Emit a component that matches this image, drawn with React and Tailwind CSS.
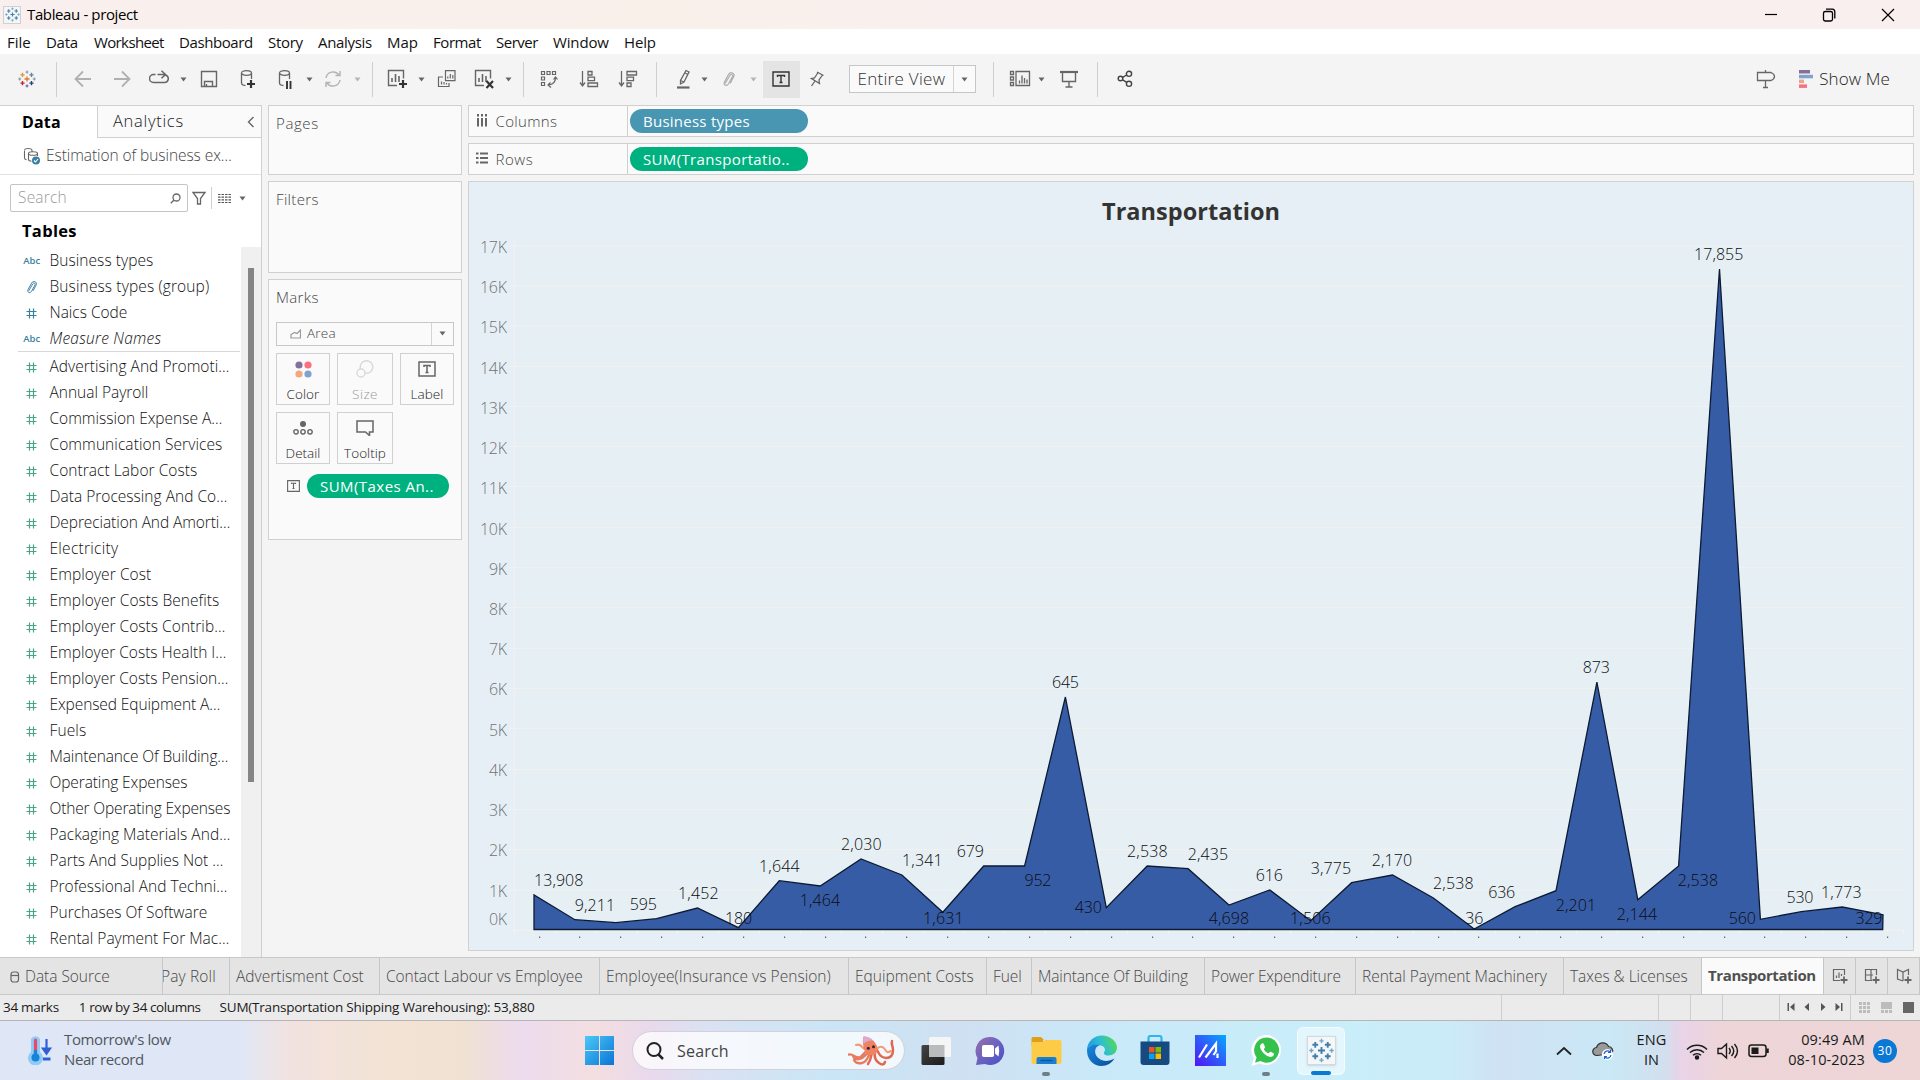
import React, { useLayoutEffect, useRef, useState } from "react";

/* Text that spreads its letters to fill a given width. */
function T({ w, className = "", children }) {
  const ref = useRef(null);
  const [ls, setLs] = useState(0);
  useLayoutEffect(() => {
    const natural = ref.current.getBoundingClientRect().width;
    setLs((w + 0.8 - natural) / String(children).length);
  }, []);
  return (
    <span ref={ref} style={{ letterSpacing: ls }} className={"inline-block shrink-0 whitespace-pre " + className}>
      {children}
    </span>
  );
}

const S = ({ w, h = w, className = "", children, stroke = "#666", sw = 1.3 }) => (
  <svg width={w} height={h} viewBox={`0 0 ${w} ${h}`} fill="none" stroke={stroke} strokeWidth={sw} className={"block shrink-0 " + className}>
    {children}
  </svg>
);

const Caret = ({ className = "", color = "#666" }) => (
  <S w={7} h={5} stroke="none" className={className}>
    <path d="M0.5 0.5h6L3.5 4.5z" fill={color} />
  </S>
);
const Sep = ({ className = "" }) => <div className={"h-[35px] w-px shrink-0 bg-[#cfcfcf] " + className} />;

const plus = (x, y, r) => `M${x - r} ${y}h${2 * r}M${x} ${y - r}v${2 * r}`;

function TableauMark({ size = 18, mono = false, className = "" }) {
  const c = mono
    ? ["#3f7fae", "#3f7fae", "#3f7fae", "#3f7fae", "#3f7fae", "#6fa5c9", "#6fa5c9", "#6fa5c9", "#6fa5c9"]
    : ["#e8762d", "#eb912c", "#5b879b", "#c72035", "#1f447e", "#7199a6", "#7199a6", "#7f93a6", "#59579b"];
  return (
    <svg width={size} height={size} viewBox="0 0 20 20" fill="none" className={"block shrink-0 " + className} strokeWidth="1.5">
      <path d={plus(10, 10, 2.8)} stroke={c[0]} />
      <path d={plus(5, 5.4, 2.3)} stroke={c[1]} />
      <path d={plus(15, 5.4, 2.3)} stroke={c[2]} />
      <path d={plus(5, 14.6, 2.3)} stroke={c[3]} />
      <path d={plus(15, 14.6, 2.3)} stroke={c[4]} />
      <path d={plus(10, 2.3, 1.7)} stroke={c[5]} strokeWidth="1.1" />
      <path d={plus(10, 17.7, 1.7)} stroke={c[8]} strokeWidth="1.1" />
      <path d={plus(1.9, 10, 1.7)} stroke={c[6]} strokeWidth="1.1" />
      <path d={plus(18.1, 10, 1.7)} stroke={c[7]} strokeWidth="1.1" />
    </svg>
  );
}

const clipPath = "M4.2 12.5L9 4.2c1-1.7 3.4-.5 2.5 1.3L7.4 13c-1.6 2.8-5.4 1-4-1.9L7.6 3.4C9.500 .2 14.200 2 12.800 5.600L9.200 12.400";

function TitleBar() {
  return (
    <div className="flex h-[29px] shrink-0 items-center bg-linear-to-r from-[#f9efee] via-[#faf0ea] via-35% to-[#f9efee] to-50%">
      <div className="ml-[3px] flex h-[18px] w-[18px] items-center justify-center border border-[#d0d0d0] bg-[#f3f5f6]">
        <TableauMark size={15} mono />
      </div>
      <T w={110} className="ml-[6px] text-[15px] text-black">Tableau - project</T>
      <S w={14} className="ml-auto" stroke="#000" sw={1.2}><path d="M1 6.500h12" /></S>
      <S w={14} className="ml-[44px]" stroke="#000" sw={1.3}>
        <rect x="1.500" y="3.500" width="9" height="9.500" rx="1.800" />
        <path d="M4 1.200h6.300a2.700 2.700 0 0 1 2.500 2.700v6.500" />
      </S>
      <S w={14} className="mr-[25px] ml-[45px]" stroke="#000" sw={1.2}><path d="M1 1l12 12M13 1L1 13" /></S>
    </div>
  );
}

const MENU = [
  ["File", 23, "w-[39px]"], ["Data", 31, "w-[48px]"], ["Worksheet", 69, "w-[85px]"], ["Dashboard", 73, "w-[89px]"],
  ["Story", 34, "w-[50px]"], ["Analysis", 53, "w-[69px]"], ["Map", 30, "w-[46px]"], ["Format", 47, "w-[63px]"],
  ["Server", 41, "w-[57px]"], ["Window", 55, "w-[71px]"], ["Help", 31, "w-[50px]"],
];

function SheetBars({ x = 0 }) {
  return <path d={`M${x + 4} 13v-4M${x + 7.500} 13V5M${x + 11} 13V7`} strokeWidth="1.600" />;
}

function Toolbar() {
  return (
    <div className="flex h-[51px] shrink-0 items-center bg-[#f4f4f4] pb-px">
      <TableauMark className="ml-[18px]" />
      <Sep className="ml-5" />
      <S w={18} className="ml-[17px]" stroke="#b0b0b0" sw={1.8}><path d="M17 9H2M9 1.500L1.500 9L9 16.500" /></S>
      <S w={18} className="ml-[21px]" stroke="#b0b0b0" sw={1.8}><path d="M1 9h15M9 1.500L16.500 9L9 16.500" /></S>
      <S w={20} h={18} className="ml-[18px]" sw={1.5}><path d="M6.500 4.500H4.500a3.800 3.800 0 0 0 0 8h11a3.800 3.800 0 0 0 2-7L16.500 4.500H8.500M12.500 .800l4 3.700l-4 3.700" /></S>
      <Caret className="ml-[11px]" />
      <S w={18} className="ml-[13px]" sw={1.4}><path d="M1.500 1.500h15v15h-15zM4.500 16.500v-5h8v5M6.500 14v2.500" /></S>
      <S w={16} h={20} className="ml-[22px]" sw={1.3}>
        <ellipse cx="6.500" cy="4" rx="5" ry="2.300" /><path d="M1.500 4v10c0 1.500 1.500 2.300 4 2.500M11.500 4v6" />
        <path d="M11 11v8M7 15h8" stroke="#333" strokeWidth="2.200" />
      </S>
      <S w={16} h={20} className="ml-[22px]" sw={1.3}>
        <ellipse cx="6.500" cy="4" rx="5" ry="2.300" /><path d="M1.500 4v10c0 1.500 1.500 2.300 4 2.500M11.500 4v6" />
        <path d="M9 12v8M12.500 12v8" stroke="#333" strokeWidth="1.900" />
      </S>
      <Caret className="ml-3" />
      <S w={20} h={18} className="ml-2.5" stroke="#b5b5b5" sw={1.5}>
        <path d="M3 8a7.200 7.200 0 0 1 13-3M17 10a7.200 7.200 0 0 1-13 3M17 1v4.500h-4.500M3 17v-4.500h4.500" />
      </S>
      <Caret className="ml-[11px]" color="#b5b5b5" />
      <Sep className="ml-[11px]" />
      <S w={21} h={20} className="ml-3.5" sw={1.4}>
        <path d="M10 16.500H1.500v-15h15v8" /><SheetBars x={1} />
        <path d="M16 11v8M12 15h8" stroke="#333" strokeWidth="2.200" />
      </S>
      <Caret className="ml-2.5" />
      <S w={20} h={18} className="ml-3" sw={1.2}>
        <path d="M8.500 .600h9.500v10h-9.500zM6 7H1.500v9.500H12V13M10.800 8.500v-2M13.300 8.500v-4.500M15.800 8.500v-3.500M4.500 14.500v-3M7 14.500v-2.500M9.500 14.500v-1.500" />
      </S>
      <S w={21} h={20} className="ml-[17px]" sw={1.4}>
        <path d="M10 16.500H1.500v-15h15v8" /><SheetBars x={1} />
        <path d="M12.500 12l6.500 7M19 12l-6.500 7" stroke="#333" strokeWidth="2.200" />
      </S>
      <Caret className="ml-2.5" />
      <Sep className="ml-[11px]" />
      <S w={18} className="ml-4" sw={1.2}>
        <path d="M1.500 1.500h3v3h-3zM7 1.500h3v3H7zM12.500 1.500h3v3h-3zM1.500 7h3v3h-3zM1.500 12.500h3v3h-3zM15.500 7.500c0 4-2 7-7 7.500M13.500 9.500l2-2.500l2 2.500M10.500 12.500L8 15l3 2.500" />
      </S>
      <S w={20} h={18} className="ml-[21px]" sw={1.3}><path d="M3.500 1v14M1 12.500L3.500 16L6 12.500M9 1.500h4v3.500H9zM9 7.200h6.500v3.500H9zM9 13h9.500v3.500H9z" /></S>
      <S w={20} h={18} className="ml-[19px]" sw={1.3}><path d="M3.500 1v14M1 12.500L3.500 16L6 12.500M9 1.500h9.500v3.500H9zM9 7.200h6.500v3.500H9zM9 13h4v3.500H9z" /></S>
      <Sep className="ml-[18px]" />
      <S w={16} h={20} className="ml-[19px]" sw={1.3}>
        <path d="M10 1.500l3 1.500L8 13l-3.500 2V11.500zM9 4l3 1.500M4.500 11.500L8 13" /><path d="M1 18.500h12.500" strokeWidth="2.200" />
      </S>
      <Caret className="ml-[9px]" />
      <S w={16} className="ml-[13px]" stroke="#b0b0b0" sw={1.2}><path d={clipPath} /></S>
      <Caret className="ml-[13px]" color="#b5b5b5" />
      <div className="ml-1.5 flex h-[37px] w-[37px] shrink-0 items-center justify-center bg-[#e4e4e4] pr-[2px]">
        <S w={18} h={16} stroke="#333" sw={1.4}><path d="M1 1h16v14H1zM5.500 6V4.500h7V6M9 4.500v7M7.500 11.500h3" /></S>
      </div>
      <S w={16} h={18} className="ml-[9px]" sw={1.3}><path d="M8 2l6.500 3.500M9 2.500L5.500 8l-3 .500l8 5l-.5-3.500l3.500-5M6 11l-3.500 5" /></S>
      <div className="ml-6 flex h-7 w-[127px] shrink-0 items-center border border-[#c6c6c6] bg-[#fafafa] pl-[7.500px]">
        <T w={87} className="text-[17px] font-[350] text-[#333]">Entire View</T>
        <div className="ml-auto flex h-full w-[22px] items-center justify-center border-l border-[#d4d4d4]"><Caret /></div>
      </div>
      <Sep className="ml-[17px]" />
      <S w={22} h={18} className="ml-[15px]" sw={1.3}><path d="M7 1.500h13.500v14H7zM1.500 1.500h3v3h-3zM1.500 7h3v3h-3zM1.500 12.500h3v3h-3zM10.500 13.500v-3M13 13.500v-8M15.500 13.500V8M18 13.500v-4" /></S>
      <Caret className="ml-[7px]" />
      <S w={18} className="ml-[15px]" sw={1.4}><path d="M2.500 3v8.500h13V3M9 11.500V17M5.500 17h7" /><path d="M0 2h18" strokeWidth="2.200" /></S>
      <Sep className="ml-[19px]" />
      <S w={16} h={18} className="ml-[19px]" stroke="#444" sw={1.4}><circle cx="3.500" cy="8.500" r="2.300" /><circle cx="12" cy="3.800" r="2.600" /><circle cx="12" cy="13.800" r="2.600" /><path d="M5.600 7.400L9.700 5M5.600 9.800l4.200 2.600" /></S>
      <S w={20} h={20} className="ml-auto" sw={1.3}><path d="M1.500 3.500h13.500q3.500 1.500 3.500 4t-3.500 4H1.500zM9.500 1v2.500M9.500 11.500v7M7 18.500h5" /></S>
      <S w={14} h={18} stroke="none" className="ml-[23px]">
        <path d="M0 0h11v3.500H0z" fill="#86709a" /><path d="M0 4.800h14v3.500H0z" fill="#7fa3cf" /><path d="M0 9.600h5v3.500H0z" fill="#f0a58a" /><path d="M0 14.400h8v3.500H0z" fill="#f9707f" />
      </S>
      <T w={70} className="mr-[30px] ml-[6px] text-[17px] font-[350] text-[#222]">Show Me</T>
    </div>
  );
}

const DIMS = [["abc", "Business types", 103], ["clip", "Business types (group)", 159], ["num", "Naics Code", 77], ["abc", "Measure Names", 111]];
const MEASURES = [
  ["Advertising And Promoti…", 179], ["Annual Payroll", 98], ["Commission Expense A…", 172], ["Communication Services", 172],
  ["Contract Labor Costs", 147], ["Data Processing And Co…", 177], ["Depreciation And Amorti…", 180], ["Electricity", 68],
  ["Employer Cost", 101], ["Employer Costs Benefits", 169], ["Employer Costs Contrib…", 175], ["Employer Costs Health I…", 176],
  ["Employer Costs Pension…", 178], ["Expensed Equipment A…", 170], ["Fuels", 36], ["Maintenance Of Building…", 178],
  ["Operating Expenses", 137], ["Other Operating Expenses", 180], ["Packaging Materials And…", 180], ["Parts And Supplies Not …", 173],
  ["Professional And Techni…", 177], ["Purchases Of Software", 157], ["Rental Payment For Mac…", 179],
];

function Field({ icon, text, w, italic, color = "#4aa583" }) {
  return (
    <div className="flex h-[26px] items-center">
      <div className="flex w-[49.500px] justify-center pl-[14px]">
        {icon === "abc" && <T w={16} className="text-[9.500px] font-semibold text-[#3b7f9f]">Abc</T>}
        {icon === "clip" && <S w={16} stroke="#3b7f9f" sw={1.1} className="h-3.5 w-3.5"><path d={clipPath} /></S>}
        {icon === "num" && <S w={11} stroke={color} sw={1.2}><path d="M3.500 .500v10M7.500 .500v10M.500 3.500h10M.500 7.500h10" /></S>}
      </div>
      <T w={w} className={"text-[15.500px] font-[350] text-[#111] " + (italic ? "italic" : "")}>{text}</T>
    </div>
  );
}

function DataPanel() {
  return (
    <div className="flex w-[262px] shrink-0 flex-col border-t border-r border-[#d0d0d0] bg-white">
      <div className="flex h-8 shrink-0">
        <div className="flex w-[97px] items-center pb-px pl-[22px]"><T w={38} className="text-[16px] font-bold text-black">Data</T></div>
        <div className="flex flex-1 items-center border-b border-l border-[#d0d0d0] bg-[#fafafa] pl-[15px]">
          <T w={70} className="text-[16.500px] font-[350] text-[#222]">Analytics</T>
          <S w={8} h={12} className="mr-[6px] ml-auto" sw={1.4}><path d="M6.500 1L1.500 6l5 5" /></S>
        </div>
      </div>
      <div className="flex h-[37px] shrink-0 items-center border-b border-[#e2e2e2]">
        <S w={18} h={18} className="ml-[23px]" sw={1.1}>
          <path d="M1.500 4v7c0 1 1 1.500 2 1.600M9 5V3M1.500 3.500C1.500 .800 9 .800 9 3.500" /><ellipse cx="10" cy="6.500" rx="4.500" ry="1.800" /><path d="M5.500 6.500v6c0 1 1 1.600 3 1.800M14.500 6.500V9" />
          <circle cx="13" cy="13.500" r="4" fill="#3b7fa5" stroke="none" /><path d="M11 13.500l1.500 1.500l2.500-3" stroke="#fff" />
        </S>
        <T w={185} className="ml-[5px] text-[15.500px] font-[350] text-[#444]">Estimation of business ex…</T>
      </div>
      <div className="mt-[9px] ml-[10px] flex h-7 shrink-0 items-center">
        <div className="flex h-7 w-[178px] items-center rounded-xs border border-[#c4c4c4] pr-1.5 pl-[7px]">
          <T w={48} className="text-[15.500px] font-[350] text-[#9a9a9a]">Search</T>
          <S w={11} className="ml-auto" sw={1.3}><circle cx="6.500" cy="4.500" r="3.500" /><path d="M4 7L.800 10.200" /></S>
        </div>
        <S w={14} className="ml-[3.500px]" sw={1.3}><path d="M1 1.500h12L8.500 7.500v5.500h-3V7.500z" /></S>
        <div className="ml-[5px] h-[22px] w-px bg-[#d0d0d0]" />
        <S w={13} h={11} className="ml-[6px]" sw={1.2} stroke="#555"><path d="M0 1.500h13M0 4.100h13M0 6.800h13M0 9.500h13" strokeDasharray="2.500 1" /></S>
        <Caret className="ml-[8px]" />
      </div>
      <div className="flex h-[35px] shrink-0 items-center pt-[3px] pl-[22px]"><T w={54} className="text-[16.500px] font-bold text-black">Tables</T></div>
      <div className="flex min-h-0 flex-1">
        <div className="w-[241px] pt-px">
          {DIMS.map(([i, t, w], k) => <Field key={t} icon={i} text={t} w={w} italic={k === 3} color="#3b7f9f" />)}
          <div className="mt-[-1px] mb-[2px] ml-[18px] h-px w-[222px] bg-[#d8d8d8]" />
          {MEASURES.map(([t, w]) => <Field key={t} icon="num" text={t} w={w} />)}
        </div>
        <div className="flex w-5 justify-center bg-[#f0f0f0] pt-[21px]"><div className="ml-[-1px] h-[514px] w-1.5 bg-[#858585]" /></div>
      </div>
    </div>
  );
}

const card = "border border-[#d0d0d0] bg-[#fafafa]";

function MarkButton({ label, w, dim, className, children }) {
  return (
    <div className={"flex h-[52px] flex-col items-center border border-[#d0d0d0] " + className}>
      <div className="flex h-[31px] items-center">{children}</div>
      <T w={w} className={"text-[13.500px] leading-[19px] font-[350] " + (dim ? "text-[#9a9a9a]" : "text-[#222]")}>{label}</T>
    </div>
  );
}

function Cards() {
  return (
    <div className="ml-1.5 flex w-[194px] shrink-0 flex-col">
      <div className={card + " h-[70px] pt-[5px] pl-[7px]"}><T w={42} className="text-[15px] font-[350] text-[#444]">Pages</T></div>
      <div className={card + " mt-1.5 h-[92px] pt-[5px] pl-[7px]"}><T w={42} className="text-[15px] font-[350] text-[#444]">Filters</T></div>
      <div className={card + " mt-1.5 flex h-[261px] flex-col pt-[6px] pl-[7px]"}>
        <T w={42} className="self-start text-[15px] font-[350] text-[#444]">Marks</T>
        <div className="mt-[13px] flex h-6 w-[178px] shrink-0 items-center border border-[#c8c8c8] pl-[13px]">
          <S w={11} h={10} stroke="#999" sw={1.2}><path d="M1 9h9.500V1L7 4.500L4.500 3.500L1 5.500z" /></S>
          <T w={28} className="ml-1.5 text-[13.500px] font-[350] text-[#444]">Area</T>
          <div className="ml-auto flex h-full w-[22px] items-center justify-center border-l border-[#d4d4d4]"><Caret /></div>
        </div>
        <div className="mt-[7px] flex shrink-0 gap-[7px]">
          <MarkButton label="Color" w={32} className="w-[54px]">
            <S w={17} stroke="none"><circle cx="4" cy="4" r="3.600" fill="#86709a" /><circle cx="13" cy="4" r="3.600" fill="#f9707f" /><circle cx="4" cy="13" r="3.600" fill="#f2a77c" /><circle cx="13" cy="13" r="3.600" fill="#7fa3cf" /></S>
          </MarkButton>
          <MarkButton label="Size" w={25} dim className="w-[56px]">
            <S w={18} stroke="#dadada" sw={1.5}><circle cx="10.500" cy="7" r="6.300" /><circle cx="5" cy="13" r="4" fill="#fafafa" /></S>
          </MarkButton>
          <MarkButton label="Label" w={32} className="w-[54px]">
            <S w={18} h={16} sw={1.5}><path d="M1 1h16v14H1zM6 6V4.500h6V6M9 4.500v7M7.500 11.500h3" /></S>
          </MarkButton>
        </div>
        <div className="mt-[7px] flex shrink-0 gap-[7px]">
          <MarkButton label="Detail" w={34} className="w-[54px]">
            <S w={20} h={14} sw={1.4}><circle cx="10" cy="3" r="3" fill="#666" stroke="none" /><circle cx="3" cy="10.800" r="2.200" /><circle cx="10" cy="10.800" r="2.200" /><circle cx="17" cy="10.800" r="2.200" /></S>
          </MarkButton>
          <MarkButton label="Tooltip" w={41} className="w-[56px]">
            <S w={18} h={16} sw={1.5}><path d="M1 1h16v11h-3.500v3.500L9.500 12H1z" /></S>
          </MarkButton>
        </div>
        <div className="mt-[10px] flex shrink-0 items-center pl-[11px]">
          <S w={13} h={12} sw={1.1}><path d="M.600 .600h11.800v10.800H.600zM4.500 4V3.200h4V4M6.500 3.200v5.300M5.500 8.500h2" /></S>
          <div className="ml-[7px] flex h-6 w-[142px] items-center rounded-full bg-[#00b180] pt-px pl-[13px]"><T w={113} className="text-[15px] font-medium text-white">SUM(Taxes An..</T></div>
        </div>
      </div>
    </div>
  );
}

function Shelf({ label, w, icon, pill, pw, green, className = "" }) {
  return (
    <div className={card + " flex h-8 shrink-0 items-center " + className}>
      <div className="flex h-full w-[159px] items-center border-r border-[#d0d0d0] pl-[7px]">
        <div className="pb-[2px]">{icon}</div>
        <T w={w} className="ml-[7.500px] text-[15px] font-[350] text-[#444]">{label}</T>
      </div>
      <div className={"ml-[2px] flex h-6 w-[178px] items-center rounded-full pt-px pl-[13px] " + (green ? "bg-[#00b180]" : "bg-[#4996b2]")}>
        <T w={pw} className="text-[15px] font-medium text-white">{pill}</T>
      </div>
    </div>
  );
}

const YS = [895, 919.7, 922.7, 918.7, 908, 927.7, 880.7, 886, 859, 875, 912.3, 866, 866, 697, 907.7, 866, 868.7, 905, 890, 920.7, 882.7, 875, 898, 929, 906.7, 890.7, 682, 899.7, 866, 269, 919.3, 911.7, 907, 914.7];
const LABELS = [
  ["13,908", 558.7, 881], ["9,211", 595, 905.7], ["595", 643.3, 904.5], ["1,452", 698.3, 893.7], ["180", 738.6, 918.7], ["1,644", 779.3, 866.7],
  ["1,464", 820, 900.7], ["2,030", 861.3, 845], ["1,341", 922.3, 861], ["1,631", 943.3, 918.7], ["679", 970.3, 852], ["952", 1038, 880.7],
  ["645", 1065.5, 683], ["430", 1088.3, 908], ["2,538", 1147.3, 852], ["2,435", 1208, 855], ["616", 1269.3, 876], ["4,698", 1229, 919],
  ["1,506", 1310.3, 919], ["3,775", 1331, 869], ["2,170", 1392, 861], ["2,538", 1453.3, 884], ["36", 1474.3, 919], ["636", 1501.7, 893],
  ["2,201", 1576, 906], ["873", 1596.3, 668], ["2,144", 1637, 915], ["2,538", 1698, 881], ["17,855", 1718.7, 255], ["560", 1742.3, 919],
  ["530", 1800, 897.5], ["1,773", 1841.3, 893], ["329", 1869, 919],
];

function Chart() {
  const pts = YS.map((y, i) => `${(534 + i * 40.88).toFixed(1)},${y}`).join(" ");
  return (
    <div className="mt-1.5 h-[770px] shrink-0 border border-[#cfd1d3] bg-[#e6eff5]">
      <svg width="1444" height="768" viewBox="469 182 1444 768" className="block">
        <rect x="514" y="245" width="1390" height="690" fill="#e6f0f4" />
        {Array.from({ length: 18 }, (_, k) => {
          const y = Math.round(930 - k * 40.32) + 0.5;
          return <line key={k} x1="509" x2="1904" y1={y} y2={y} stroke="#f1f1ef" />;
        })}
        <line x1="514.500" x2="514.500" y1="238" y2="934" stroke="#f0f1f0" />
        {Array.from({ length: 35 }, (_, k) => {
          const x = Math.round(514 + k * 40.86) + 0.5;
          return <line key={k} x1={x} x2={x} y1="930" y2="934" stroke="#f5f4f2" />;
        })}
        <polygon points={`534,929.500 ${pts} 1882.700,929.500`} fill="#375ca6" stroke="#0d1a33" strokeWidth="1.300" />
        {Array.from({ length: 34 }, (_, k) => (
          <rect key={k} x={Math.round(538.6 + k * 40.86)} y="936.500" width="1.200" height="1.500" fill="#666" />
        ))}
        <g fontFamily="Open Sans, sans-serif" fontSize="16" fontWeight="350" fill="#6f7275" textAnchor="end">
          {Array.from({ length: 18 }, (_, k) => (
            <text key={k} x="507" y={(k ? 930.9 - k * 40.24 : 919.3) + 6} textLength={k > 9 ? 27 : 18}>{`${k}K`}</text>
          ))}
        </g>
        <g fontFamily="Open Sans, sans-serif" fontSize="16" fontWeight="350" fill="#0a0c10" textAnchor="middle">
          {LABELS.map(([t, x, y], k) => (
            <text key={k} x={x} y={y + 5.3} textLength={t.length === 6 ? 49.5 : t.length === 5 ? 40.5 : t.length * 9}>{t}</text>
          ))}
        </g>
        <text x="1191" y="219.500" textAnchor="middle" textLength="178" fontFamily="Open Sans, sans-serif" fontWeight="700" fontSize="23.500" fill="#333">Transportation</text>
      </svg>
    </div>
  );
}

const TABS = [
  ["Advertisment Cost", 127, "w-[150px]"], ["Contact Labour vs Employee", 196, "w-[220px]"], ["Employee(Insurance vs Pension)", 224, "w-[249px]"],
  ["Equipment Costs", 118, "w-[138px]"], ["Fuel", 28, "w-[45px]"], ["Maintance Of Building", 149, "w-[173px]"], ["Power Expenditure", 129, "w-[151px]"],
  ["Rental Payment Machinery", 184, "w-[208px]"], ["Taxes & Licenses", 117, "w-[138px]"],
];
const tab = "flex h-full shrink-0 items-center border-r border-[#c6c6c6] ";

function SheetTabs() {
  return (
    <div className="flex h-[38px] shrink-0 items-center border-t border-b border-[#c8c8c8] bg-[#e4e4e4] text-[15.500px] font-[350] text-[#484848]">
      <div className={tab + "w-[163px] pt-px pl-[10px]"}>
        <S w={10} h={12} sw={1.2}><rect x="1" y="1" width="7.500" height="10" rx="2.500" /><path d="M1 4.500h7.500" /></S>
        <T w={84} className="ml-[5px]">Data Source</T>
      </div>
      <div className={tab + "w-[67px] overflow-hidden pt-px"}><T w={54} className="ml-[-2px]">Pay Roll</T></div>
      {TABS.map(([t, w, c]) => <div key={t} className={tab + "pt-px pl-[6px] " + c}><T w={w}>{t}</T></div>)}
      <div className={tab + "w-[122px] bg-[#fafafa] pb-px pl-[6px]"}><T w={107} className="text-[15px] font-bold text-[#505050]">Transportation</T></div>
      <div className={tab + "w-8 justify-center"}><S w={16} h={17} sw={1.2}><path d="M8 12.500H1.500v-11h11V7M4.500 10V7.500M7 10V4.500M9.500 8V6" /><path d="M12 8.500v7M8.500 12h7" strokeWidth="1.800" /></S></div>
      <div className={tab + "w-8 justify-center"}><S w={16} h={17} sw={1.2}><path d="M8 12.500H1.500v-11h11V7M1.500 7H9M7 1.500v11" /><path d="M12 8.500v7M8.500 12h7" strokeWidth="1.800" /></S></div>
      <div className={tab + "w-8 justify-center"}><S w={16} h={17} sw={1.2}><path d="M7 13L1.500 11V1.500L7 4l5.500-2.500V7M7 4v9" /><path d="M12 8.500v7M8.500 12h7" strokeWidth="1.800" /></S></div>
    </div>
  );
}

function StatusBar() {
  const cell = "h-full shrink-0 border-l border-[#cdcdcd] ";
  return (
    <div className="flex h-[26px] shrink-0 items-center border-b border-[#b9b4ba] bg-[#ebebeb] text-[13.500px] text-[#1a1a1a]">
      <T w={55} className="ml-[3px]">34 marks</T>
      <T w={121} className="ml-[20px]">1 row by 34 columns</T>
      <T w={314} className="ml-[19px]">SUM(Transportation Shipping Warehousing): 53,880</T>
      <div className={cell + "ml-auto w-[157px]"} />
      <div className={cell + "w-8"} />
      <div className={cell + "w-8"} />
      <div className={cell + "w-[57px]"} />
      <div className={cell + "flex w-[71px] items-center gap-[8px] pb-px pl-[7px]"}>
        <S w={8} h={8} stroke="none"><path d="M.500 0h1.500v8H.500zM7.500 0v8L3 4z" fill="#555" /></S>
        <S w={8} h={8} stroke="none"><path d="M6 0v8L1.500 4z" fill="#555" /></S>
        <S w={8} h={8} stroke="none"><path d="M2 0v8l4.500-4z" fill="#555" /></S>
        <S w={8} h={8} stroke="none"><path d="M6 0h1.500v8H6zM.500 0v8L5 4z" fill="#555" /></S>
      </div>
      <div className={cell + "flex w-[70px] items-center gap-[11px] pb-px pl-[8px]"}>
        <S w={11} h={11} stroke="none" ><path d="M0 0h3v3H0zM4 0h3v3H4zM8 0h3v3H8zM0 4h3v3H0zM4 4h3v3H4zM8 4h3v3H8zM0 8h3v3H0zM4 8h3v3H4zM8 8h3v3H8z" fill="#bcbcbc" /></S>
        <S w={11} h={11} stroke="none"><path d="M0 0h11v7H0zM0 8h3v3H0zM4 8h3v3H4zM8 8h3v3H8z" fill="#bcbcbc" /></S>
        <div className="h-[11px] w-[11px] bg-[#666]" />
      </div>
    </div>
  );
}

function Octopus() {
  return (
    <svg width="48" height="32" viewBox="0 0 48 32" fill="none" className="block shrink-0" strokeLinecap="round">
      <path d="M19 16c-4 1-4 7-9 6.500S6 19 1 19.500M20 18c-3 2-4 5-8 6s-6 0-7-3M22 18c-2 4-3 9-8 10s-7-1-8-3" stroke="#e87a60" strokeWidth="2.300" />
      <path d="M24 17c-1 5-1 8-4 12M27 17c-1 5 1 9 4 11s5 2 6-1M29 15c2 4 4 8 9 8s7-3 7-8-2-4-1-9" stroke="#df6850" strokeWidth="2.500" />
      <path d="M29 14c2-3 6-3 8 .500s3 3 6 1.500M17 14c-4-.500-3-6-9-4" stroke="#f29a7a" strokeWidth="2.100" />
      <path d="M15.500 1.500c4-.500 10 3 12 7c2 3 3 6 1 9c-3 4-10 3-11.500-1c-1.500-3.500-3-10-1.500-15z" fill="#f0835f" />
      <path d="M15.500 1.500c4 0 7 1.500 9.500 4c-4-.500-7 1-9.500 3.500c-.500-2-.500-5 0-7.500z" fill="#dcaace" />
      <circle cx="20.300" cy="13.200" r="1.500" fill="#33224a" /><circle cx="25.500" cy="11.800" r="1.500" fill="#33224a" />
    </svg>
  );
}

const app = "flex h-[48px] w-[48px] shrink-0 items-center justify-center";

function Taskbar() {
  return (
    <div className="flex h-[59px] shrink-0 items-center bg-[linear-gradient(90deg,#dfe7f6_0px,#dfe7f6_240px,#f2e2df_290px,#f2e3d3_400px,#f0e1d3_465px,#ecdcee_520px,#f3dee0_595px,#e9d9ec_650px,#dbe1f2_700px,#c9e6f6_830px,#cfe0f2_960px,#c9e9f8_1100px,#c9eefa_1340px,#cbebf8_1450px,#cfe2f3_1500px,#cae8f6_1610px,#d2dfee_1665px,#e9d3e8_1680px,#edd5d8_1720px,#eed5d6_1920px)] text-[#333]">
      <svg width="26" height="32" viewBox="0 0 26 32" className="mb-[3px] ml-[27px] block shrink-0" fill="none">
        <path d="M4 6a5 5 0 0 1 9 0v13a7.500 7.500 0 1 1-9 0z" fill="#8fcbf7" />
        <path d="M8.500 7v17" stroke="#e8486a" strokeWidth="3.200" strokeLinecap="round" /><path d="M8.500 17v7" stroke="#1c84d4" strokeWidth="3.200" /><circle cx="8.500" cy="24.500" r="4" fill="#1583d8" />
        <path d="M19.500 6v11M16 15.500l3.500 5l3.500-5z" stroke="#2f5fd8" strokeWidth="2.200" fill="#2f5fd8" /><path d="M16 26h7.500" stroke="#2f5fd8" strokeWidth="3" />
      </svg>
      <div className="mb-[3px] ml-[11px] flex w-[107px] flex-col items-start text-[15px] leading-5 text-[#4f5660]">
        <T w={106}>Tomorrow's low</T><T w={79}>Near record</T>
      </div>
      <svg width="30" height="30" viewBox="0 0 30 30" className="ml-[414px] block shrink-0">
        <defs><linearGradient id="win" x1="0" y1="0" x2="1" y2="1" gradientUnits="objectBoundingBox"><stop stopColor="#4cc8f8" /><stop offset="1" stopColor="#0a74d6" /></linearGradient></defs>
        <path d="M0 0h14v14H0zM15 0h14v14H15zM0 15h14v14H0zM15 15h14v14H15z" fill="url(#win)" />
      </svg>
      <div className="ml-[17px] flex h-[39px] w-[273px] shrink-0 items-center rounded-full border border-[#d3cfdd] bg-white/75 pl-3">
        <S w={20} h={20} stroke="#222" sw={2}><circle cx="9" cy="8.500" r="6.500" /><path d="M13.500 13.500l4.500 4.500" strokeWidth="2.500" /></S>
        <T w={51} className="ml-[12px] text-[16px] text-[#444]">Search</T>
        <div className="mr-2 ml-auto"><Octopus /></div>
      </div>
      <div className="ml-[7px] flex h-full w-[434px] shrink-0 items-center">
        <div className={app + " mr-[6px]"}>
          <svg width="30" height="30" viewBox="0 0 30 30">
            <defs><linearGradient id="tv" x1="0" y1="0" x2="1" y2="1"><stop stopColor="#444" /><stop offset="1" stopColor="#1c1c1c" /></linearGradient></defs>
            <rect x=".500" y="9" width="23" height="20" rx="1.500" fill="url(#tv)" /><rect x="8" y="1" width="22" height="20" rx="1.500" fill="#f5f5f5" /><path d="M8 9h15.500v12H8z" fill="#b9bbbd" /></svg>
        </div>
        <div className={app + " mr-[8px]"}>
          <svg width="30" height="30" viewBox="0 0 30 30"><defs><linearGradient id="chat" x1="0" y1="0" x2="1" y2="1"><stop stopColor="#9a6fa8" /><stop offset="0.500" stopColor="#6a62c0" /><stop offset="1" stopColor="#4750c8" /></linearGradient></defs><path d="M15 1a14 14 0 1 1-5 27l-9 1l1.500-7A14 14 0 0 1 15 1z" fill="url(#chat)" /><rect x="7" y="9" width="12" height="12" rx="1.800" fill="#fff" /><path d="M20 12.500l3.500-3q1.500 6 0 11l-3.500-3z" fill="#fff" /></svg>
        </div>
        <div className={app + " relative mr-[7px]"}>
          <svg width="31" height="28" viewBox="0 0 31 28"><path d="M.500 1.500q0-1.500 1.500-1.500h8l3 3h-1v6H.500z" fill="#e09f15" /><path d="M.500 5h11l2.500-2h14.500q2 0 2 2v20q0 2-2 2h-26q-2 0-2-2z" fill="#fdcb46" /><path d="M5.500 27v-5q0-2 2-2h16q2 0 2 2V27z" fill="#1a7fd0" /><path d="M9.500 23.500h12" stroke="#0b5a9c" strokeWidth="1.500" /></svg>
          <span className="absolute bottom-[-1px] h-[4px] w-2 rounded-full bg-[#6f7f88]" />
        </div>
        <div className={app + " mr-[6px]"}>
          <svg width="31" height="31" viewBox="0 0 31 31">
            <defs>
              <linearGradient id="e1" x1="0" x2="1" y1="0.600" y2="0.300"><stop stopColor="#1f97df" /><stop offset="0.500" stopColor="#2dbfd0" /><stop offset="1" stopColor="#58d94f" /></linearGradient>
              <linearGradient id="e2" x1="0" x2="1" y1="0" y2="1"><stop stopColor="#1a8be0" /><stop offset="1" stopColor="#0a4a98" /></linearGradient>
            </defs>
            <path d="M1 14C2 6 8 .500 16 .500s15 6 15 12c0 5-4 8-8.500 8c-4 0-5.500-2-4-4c1-1.300.800-5-3.500-6C9 9 3 10 1 14z" fill="url(#e1)" />
            <path d="M1 14c2-4 8-5.500 13-3.800c-6 1-7 10 0 14c5 3 10 1.500 14.500-.700C26 28 21 31 15.500 31C7 31 .500 24 1 14z" fill="url(#e2)" />
          </svg>
        </div>
        <div className={app + " mr-[7px]"}>
          <svg width="30" height="31" viewBox="0 0 30 31"><path d="M8.500 7V3q0-2 2-2h9q2 0 2 2v4" fill="none" stroke="#2bb8ee" strokeWidth="2.200" /><path d="M.500 6.500h29V27q0 3-3 3h-23q-3 0-3-3z" fill="#174a80" /><path d="M9 12h5.500v5.500H9z" fill="#f25022" /><path d="M15.500 12H21v5.500h-5.500z" fill="#7fba00" /><path d="M9 18.500h5.500V24H9z" fill="#00a4ef" /><path d="M15.500 18.500H21V24h-5.500z" fill="#ffb900" /></svg>
        </div>
        <div className={app + " mr-[8px]"}>
          <svg width="31" height="31" viewBox="0 0 31 31"><defs><linearGradient id="asus" x1="0" y1="1" x2="1" y2="0"><stop stopColor="#5413f5" /><stop offset="1" stopColor="#05a8ff" /></linearGradient></defs><path d="M0 0h31v31H0z" fill="url(#asus)" /><path d="M4 22.500L12 9.500M10.500 22.500L21 8.500V16M22.500 18.500v4.500M18.500 20l3-4.500" stroke="#fff" strokeWidth="2.200" fill="none" /></svg>
        </div>
        <div className={app + " relative mr-[7px]"}>
          <svg width="31" height="32" viewBox="0 0 31 32"><path d="M15.500 0a15 15 0 1 1-7 28.500L.500 31l2.300-8A15 15 0 0 1 15.500 0z" fill="#fff" /><path d="M15.500 2.500a12.600 12.600 0 1 1-6.200 23.600L4 27.700l1.600-5.200A12.600 12.600 0 0 1 15.500 2.500z" fill="#35c24c" /><path d="M11 8.500c-3 1.500-2.500 5 1 9s7.500 5.500 10 3.500c1.500-1.300 1-2.500.500-2.800l-2.800-1.500c-.800-.300-1.500 1.300-2.200 1.500c-1.500 0-4.500-3-4.500-4c0-.800 1.300-1.300 1-2.200l-1.200-3c-.300-.700-1.200-.800-1.800-.500z" fill="#fff" /></svg>
          <span className="absolute bottom-[-1px] h-[4px] w-2 rounded-full bg-[#6f7f88]" />
        </div>
        <div className={app + " relative rounded-md border border-white/60 bg-white/50"}>
          <div className="flex h-[29px] w-[29px] items-center justify-center border border-[#d3dadd] bg-[#f4f6f7] shadow-sm"><TableauMark size={25} mono /></div>
          <span className="absolute bottom-[-1px] h-[4px] w-5 rounded-full bg-[#0a78d4]" />
        </div>
      </div>
      <S w={16} h={10} className="ml-auto" stroke="#222" sw={1.8}><path d="M1 8.500L8 2l7 6.500" /></S>
      <svg width="23" height="20" viewBox="0 0 23 20" className="ml-[20px] block shrink-0">
        <path d="M5 14.500a4 4 0 0 1-.500-8A6.500 6.500 0 0 1 16.500 5.500a4.500 4.500 0 0 1 3.500 7z" fill="#9a9a9a" stroke="#333" strokeWidth="1.200" />
        <circle cx="15.500" cy="13.500" r="5.600" fill="#fff" /><path d="M12 13a3.500 3.500 0 0 1 6-2M19 14a3.500 3.500 0 0 1-6 2M18.500 9v2.500H16M12.500 18v-2.500H15" stroke="#1d66c4" strokeWidth="1.200" fill="none" />
      </svg>
      <div className="mb-px ml-[22px] flex w-[29px] flex-col items-center text-[14.500px] leading-5 text-[#1a1a1a]"><T w={29}>ENG</T><T w={14}>IN</T></div>
      <S w={22} h={18} className="ml-[20px]" stroke="#1a1a1a" sw={1.5}><path d="M1 7.500a14 14 0 0 1 20 0M4 10.500a10 10 0 0 1 14 0M7 13.300a6 6 0 0 1 8 0" /><circle cx="11" cy="15.500" r="1.500" fill="#1a1a1a" /></S>
      <S w={22} h={18} className="ml-[9px]" stroke="#1a1a1a" sw={1.4}><path d="M1 6.500h3.500L9.500 2v14l-5-4.500H1zM12 6q2.500 3 0 6M14.500 4q4.500 5 0 10M17.500 2q6 7 0 14" /></S>
      <S w={22} h={14} className="ml-[9px]" stroke="#1a1a1a" sw={1.5}><rect x="1" y="1" width="17" height="11.500" rx="2.500" /><path d="M19.500 4.500v4.500" strokeWidth="2.500" /><path d="M3.500 3.500h7v6.500h-7z" fill="#1a1a1a" stroke="none" /></S>
      <div className="mb-[2px] ml-[18px] flex w-[77px] flex-col items-end text-[14.500px] leading-5 text-[#1a1a1a]"><T w={63}>09:49 AM</T><T w={76}>08-10-2023</T></div>
      <div className="mr-[23px] ml-2 flex h-6 w-6 shrink-0 items-center justify-center rounded-full bg-[#0a78d4] text-white"><T w={14} className="text-[12px]">30</T></div>
    </div>
  );
}

export default function App() {
  return (
    <div className="flex h-[1080px] w-[1920px] flex-col overflow-hidden bg-[#f4f4f4] font-['Open_Sans',sans-serif]">
      <TitleBar />
      <div className="flex h-[25px] shrink-0 items-center bg-white pl-[7px]">
        {MENU.map(([t, w, c]) => <div key={t} className={"shrink-0 text-[15px] leading-6 text-[#111] " + c}><T w={w}>{t}</T></div>)}
      </div>
      <Toolbar />
      <div className="flex h-[852px] shrink-0">
        <DataPanel />
        <Cards />
        <div className="ml-1.5 flex w-[1446px] shrink-0 flex-col">
          <Shelf label="Columns" w={61} pill="Business types" pw={106} icon={<S w={12} h={13} stroke="#666" sw={2}><path d="M2 0v2.500M2 4v8.500M6 0v2.500M6 4v8.500M10 0v2.500M10 4v8.500" /></S>} />
          <Shelf label="Rows" w={37} pill="SUM(Transportatio.." pw={146} green className="mt-1.5" icon={<S w={12} h={12} stroke="#666" sw={2}><path d="M0 1.500h2.500M4 1.500h8M0 6h2.500M4 6h8M0 10.500h2.500M4 10.500h8" /></S>} />
          <Chart />
        </div>
      </div>
      <SheetTabs />
      <StatusBar />
      <Taskbar />
    </div>
  );
}
